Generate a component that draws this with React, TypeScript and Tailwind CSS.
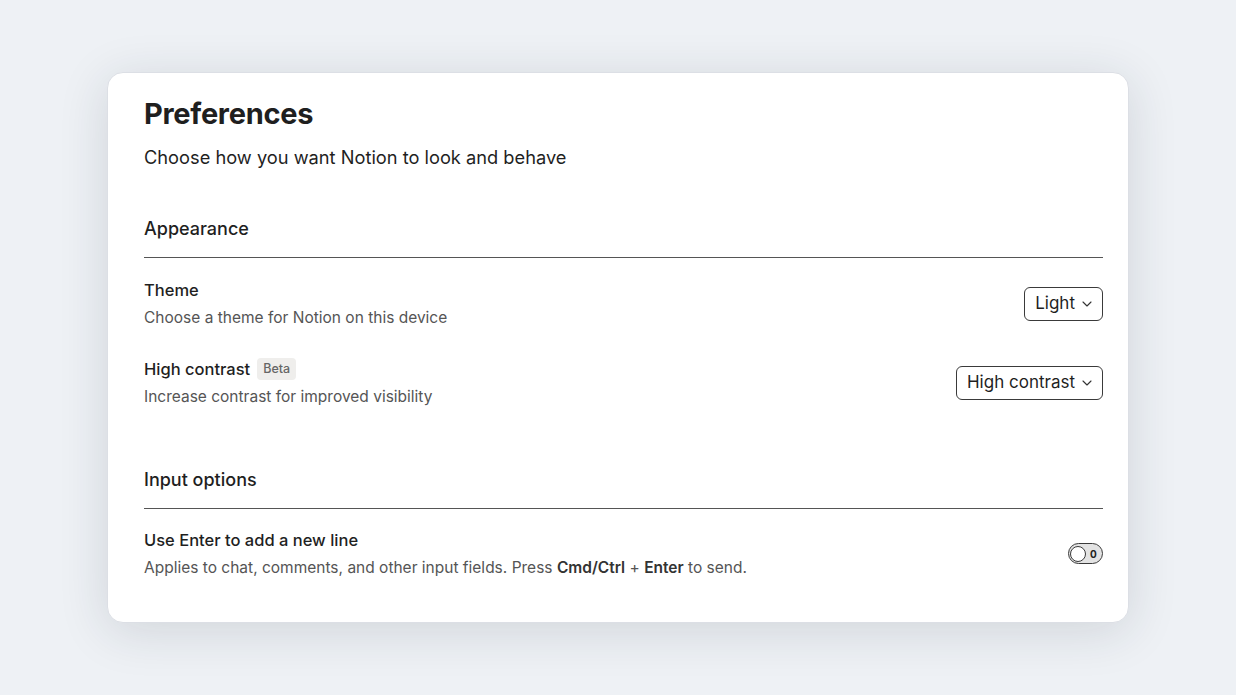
import React from 'react';

function Chevron() {
    return (
        <svg width="10" height="6" viewBox="0 0 10 6" fill="none" className="mt-[1px]">
            <path d="M1 1l4 4 4-4" stroke="#333" strokeWidth="1.1" strokeLinecap="round" strokeLinejoin="round" />
        </svg>
    );
}

function Select({ label }: { label: string }) {
    return (
        <button className="flex items-center gap-[7px] h-[34px] pl-[10px] pr-[10px] border border-[#3a3a3a] rounded-[6px] bg-white text-[17px] text-[#1f1f1f]">
            <span>{label}</span>
            <Chevron />
        </button>
    );
}

function Toggle() {
    return (
        <div className="flex items-center w-[35px] h-[21px] rounded-full border-[1.5px] border-[#3a3a3a] bg-[#e3e3e3] px-[1px]">
            <span className="w-[16px] h-[16px] rounded-full bg-white border-[1.5px] border-[#3a3a3a]" />
            <span className="ml-[4px] text-[10px] font-bold leading-none text-[#222]">0</span>
        </div>
    );
}

export default function App() {
    return (
        <div className="h-screen w-full flex items-center justify-center bg-[#eef1f5] font-['Inter',sans-serif]">
            <div className="w-[1022px] bg-white rounded-[16px] border border-[#dcdfe5] shadow-[0_8px_50px_rgba(30,40,60,0.14)] pl-[36px] pr-[25px] pt-[23px] pb-[43px]">
                <h1 className="text-[29px] leading-[36px] font-bold text-[#1f1f1f] tracking-[-0.3px]">Preferences</h1>
                <p className="mt-[11px] text-[18.25px] leading-[28px] text-[#1f1f1f]">Choose how you want Notion to look and behave</p>

                <div className="mt-[44px] pb-[14px] border-b border-[#555]">
                    <h2 className="text-[18px] leading-[28px] font-medium text-[#1f1f1f]">Appearance</h2>
                </div>

                <div className="mt-[20px] flex items-center justify-between">
                    <div>
                        <div className="text-[16.5px] leading-[24px] font-medium text-[#1f1f1f]">Theme</div>
                        <div className="mt-[5px] text-[15.5px] leading-[22px] text-[#555]">Choose a theme for Notion on this device</div>
                    </div>
                    <Select label="Light" />
                </div>

                <div className="mt-[28px] flex items-center justify-between">
                    <div>
                        <div className="flex items-center gap-[7px] text-[16.5px] leading-[24px] font-medium text-[#1f1f1f]">
                            High contrast
                            <span className="px-[6px] h-[22px] flex items-center rounded-[4px] bg-[#efeeec] text-[12.5px] font-medium text-[#666]">Beta</span>
                        </div>
                        <div className="mt-[5px] text-[15.5px] leading-[22px] text-[#555]">Increase contrast for improved visibility</div>
                    </div>
                    <Select label="High contrast" />
                </div>

                <div className="mt-[58px] pb-[14px] border-b border-[#555]">
                    <h2 className="text-[18px] leading-[28px] font-medium text-[#1f1f1f]">Input options</h2>
                </div>

                <div className="mt-[19px] flex items-center justify-between">
                    <div>
                        <div className="text-[16.5px] leading-[24px] font-medium text-[#1f1f1f]">Use Enter to add a new line</div>
                        <div className="mt-[5px] text-[15.5px] leading-[22px] text-[#555]">
                            Applies to chat, comments, and other input fields. Press <b className="font-semibold text-[#333]">Cmd/Ctrl</b> + <b className="font-semibold text-[#333]">Enter</b> to send.
                        </div>
                    </div>
                    <Toggle />
                </div>
            </div>
        </div>
    );
}
